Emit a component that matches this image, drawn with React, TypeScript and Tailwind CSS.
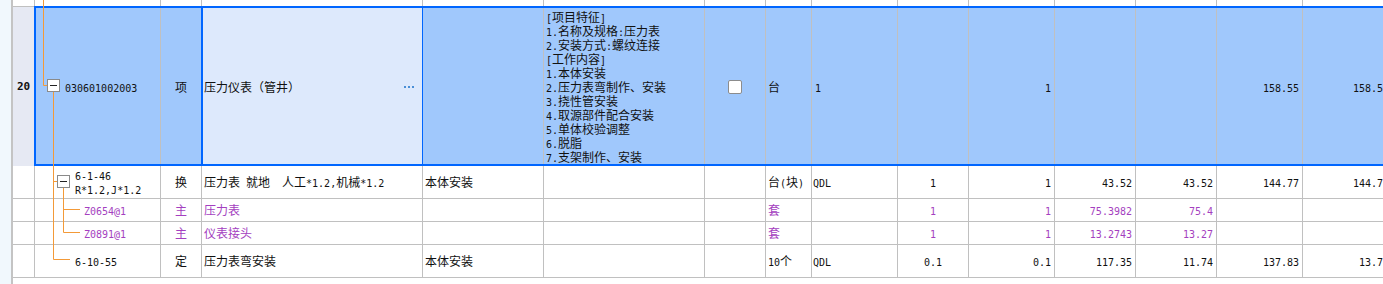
import React from "react";

const W = [
  "w-[22px]",
  "w-[126px]",
  "w-[41px]",
  "w-[221px]",
  "w-[121px]",
  "w-[161px]",
  "w-[61px]",
  "w-[46px]",
  "w-[86px]",
  "w-[71px]",
  "w-[86px]",
  "w-[81px]",
  "w-[81px]",
  "w-[86px]",
  "w-[90px]",
];

const AL = [
  "justify-center",
  "justify-start",
  "justify-center",
  "justify-start pl-[2px]",
  "justify-start pl-[2px]",
  "justify-start pl-[2px]",
  "justify-center",
  "justify-start pl-[2px]",
  "justify-start pl-[1px]",
  "justify-center",
  "justify-end pr-[3px]",
  "justify-end pr-[3px]",
  "justify-end pr-[3px]",
  "justify-end pr-[3px]",
  "justify-end pr-[3px]",
];

// latin runs get a 6px-wide mono face, like the half-width glyphs of the original grid
const M: React.FC<{ s: string }> = ({ s }) => (
  <>
    {s.split(/([\x20-\x7e]+)/).map((part, i) =>
      part === "" ? null : /^[\x20-\x7e]+$/.test(part) ? (
        <span
          key={i}
          className="font-['DejaVu_Sans_Mono',monospace] text-[10px] leading-[10px]"
        >
          {part}
        </span>
      ) : (
        <span key={i}>{part}</span>
      )
    )}
  </>
);

interface CellsProps {
  v: React.ReactNode[];
  bgs?: string[];
}

const Cells: React.FC<CellsProps> = ({ v, bgs }) => (
  <>
    {W.map((w, i) => (
      <div
        key={i}
        className={`${w} ${AL[i]} ${bgs ? bgs[i] : ""} relative shrink-0 flex items-center h-full border-r border-[#c0c0c0] whitespace-pre`}
      >
        {typeof v[i] === "string" ? (
          <span>
            <M s={v[i] as string} />
          </span>
        ) : (
          v[i]
        )}
      </div>
    ))}
  </>
);

const features = [
  "[项目特征]",
  "1.名称及规格:压力表",
  "2.安装方式:螺纹连接",
  "[工作内容]",
  "1.本体安装",
  "2.压力表弯制作、安装",
  "3.挠性管安装",
  "4.取源部件配合安装",
  "5.单体校验调整",
  "6.脱脂",
  "7.支架制作、安装",
];

const TreeLines = () => (
  <svg
    className="absolute left-0 top-0 pointer-events-none"
    width={1383}
    height={284}
    viewBox="0 0 1383 284"
  >
    <g stroke="#f39a38" strokeWidth={1} fill="none">
      <path d="M43.5 0 V85.5 H47" />
      <path d="M53.5 92 V259.5 H70" />
      <path d="M53.5 181.5 H57" />
      <path d="M63.5 188 V232.5 H80" />
      <path d="M63.5 209.5 H80" />
    </g>
    <rect x={47.5} y={79.5} width={12} height={12} fill="#fff" stroke="#8a8a8a" />
    <path d="M50 85.5 H57" stroke="#222" />
    <rect x={57.5} y={175.5} width={12} height={12} fill="#fff" stroke="#8a8a8a" />
    <path d="M60 181.5 H67" stroke="#222" />
  </svg>
);

const blue = "bg-[#a0c8fc]";

export default function App() {
  return (
    <div className="relative w-[1383px] h-[284px] overflow-hidden bg-white flex font-['Noto_Sans_CJK_SC',sans-serif] text-[12px] leading-[14px] text-[#111]">
      <div className="w-[11px] shrink-0 bg-[#f1f8fd]" />
      <div className="w-[2px] shrink-0 bg-[#c4c4c4]" />
      <div className="flex-1 flex flex-col">
        {/* previous row tail */}
        <div className="h-[6px] flex">
          <Cells v={[]} />
        </div>

        {/* row 20, selected */}
        <div className="relative h-[160px] flex border-t border-[#c0c0c0]">
          <Cells
            bgs={[
              "bg-[#e6e9f3]",
              blue,
              blue,
              "bg-[#dde9fc]",
              blue,
              blue,
              blue,
              blue,
              blue,
              blue,
              blue,
              blue,
              blue,
              blue,
              blue,
            ]}
            v={[
              <span className="font-bold font-['DejaVu_Sans_Mono',monospace] text-[11px]">20</span>,
              <span className="pl-[30px]">
                <M s="030601002003" />
              </span>,
              "项",
              <div className="flex w-full items-center justify-between pr-[8px]">
                <span>压力仪表（管井）</span>
                <span className="flex gap-[2px]">
                  <span className="w-[2px] h-[2px] bg-[#4a8fd6]" />
                  <span className="w-[2px] h-[2px] bg-[#4a8fd6]" />
                  <span className="w-[2px] h-[2px] bg-[#4a8fd6]" />
                </span>
                <div className="absolute top-[-1px] bottom-0 left-[-1px] right-[-2px] border-2 border-[#0066ff]" />
              </div>,
              "",
              <div className="flex flex-col pt-[1px]">
                {features.map((f) => (
                  <div key={f} className="h-[14px] leading-[14px]">
                    <M s={f} />
                  </div>
                ))}
              </div>,
              <div className="w-[14px] h-[14px] bg-white border border-[#8c8c8c] rounded-[2px]" />,
              "台",
              <span className="pl-[2px]">
                <M s="1" />
              </span>,
              "",
              "1",
              "",
              "",
              "158.55",
              "158.55",
            ]}
          />
          <div className="absolute top-[-1px] bottom-0 left-[21px] right-[-20px] border-2 border-[#0066ff] pointer-events-none" />
        </div>

        {/* row 21 */}
        <div className="h-[33px] flex border-b border-[#c0c0c0]">
          <Cells
            v={[
              "",
              <div className="pl-[40px]">
                <div className="h-[14px]">
                  <M s="6-1-46" />
                </div>
                <div className="h-[14px]">
                  <M s="R*1.2,J*1.2" />
                </div>
              </div>,
              "换",
              "压力表 就地\u3000人工*1.2,机械*1.2",
              "本体安装",
              "",
              "",
              "台(块)",
              "QDL",
              "1",
              "1",
              "43.52",
              "43.52",
              "144.77",
              "144.77",
            ]}
          />
        </div>

        {/* row 22 */}
        <div className="h-[23px] flex border-b border-[#c0c0c0] text-[#a43fc0]">
          <Cells
            v={[
              "",
              <span className="pl-[49px]">
                <M s="Z0654@1" />
              </span>,
              "主",
              "压力表",
              "",
              "",
              "",
              "套",
              "",
              "1",
              "1",
              "75.3982",
              "75.4",
              "",
              "",
            ]}
          />
        </div>

        {/* row 23 */}
        <div className="h-[23px] flex border-b border-[#c0c0c0] text-[#a43fc0]">
          <Cells
            v={[
              "",
              <span className="pl-[49px]">
                <M s="Z0891@1" />
              </span>,
              "主",
              "仪表接头",
              "",
              "",
              "",
              "套",
              "",
              "1",
              "1",
              "13.2743",
              "13.27",
              "",
              "",
            ]}
          />
        </div>

        {/* row 24 */}
        <div className="h-[33px] flex border-b border-[#c0c0c0]">
          <Cells
            v={[
              "",
              <span className="pl-[40px]">
                <M s="6-10-55" />
              </span>,
              "定",
              "压力表弯安装",
              "本体安装",
              "",
              "",
              "10个",
              "QDL",
              "0.1",
              "0.1",
              "117.35",
              "11.74",
              "137.83",
              "13.78",
            ]}
          />
        </div>
      </div>
      <TreeLines />
    </div>
  );
}
